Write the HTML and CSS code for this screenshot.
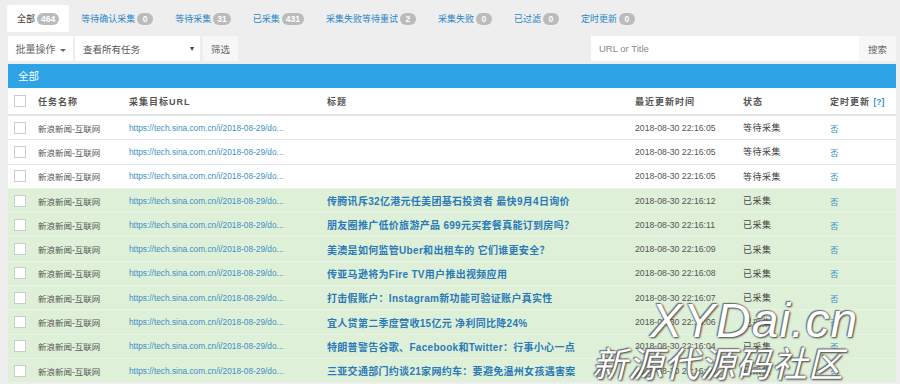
FILE: index.html
```html
<!DOCTYPE html>
<html lang="zh-CN">

<head>
    <meta charset="UTF-8">
    <title>采集任务</title>
    <link rel="stylesheet" href="styles.css">
</head>

<body>

    <!-- Status tabs -->
    <ul class="tabs">
        <li class="active">全部 <span class="badge">464</span></li>
        <li><a href="#">等待确认采集</a> <span class="badge">0</span></li>
        <li><a href="#">等待采集</a> <span class="badge">31</span></li>
        <li><a href="#">已采集</a> <span class="badge">431</span></li>
        <li><a href="#">采集失败等待重试</a> <span class="badge">2</span></li>
        <li><a href="#">采集失败</a> <span class="badge">0</span></li>
        <li><a href="#">已过滤</a> <span class="badge">0</span></li>
        <li><a href="#">定时更新</a> <span class="badge">0</span></li>
    </ul>

    <!-- Toolbar -->
    <div class="toolbar">
        <div class="actions">
            <button class="btn btn-batch">批量操作 <span class="caret"></span></button>
            <div class="select">查看所有任务 <span class="arrow">▾</span></div>
            <button class="btn btn-light">筛选</button>
        </div>
        <div class="search">
            <input type="text" placeholder="URL or Title">
            <button class="btn btn-light">搜索</button>
        </div>
    </div>

    <!-- Task table -->
    <div class="panel">
        <div class="panel-heading">全部</div>
        <table class="task-table">
            <thead>
                <tr>
                    <th class="col-check"><span class="check"></span></th>
                    <th class="col-name">任务名称</th>
                    <th class="col-url">采集目标URL</th>
                    <th class="col-title">标题</th>
                    <th class="col-time">最近更新时间</th>
                    <th class="col-status">状态</th>
                    <th class="col-cron">定时更新 <a href="#">[?]</a></th>
                </tr>
            </thead>
            <tbody id="task-tbody"></tbody>
        </table>
    </div>

    <div class="watermark">
        <div class="wm-big">XYDai.cn</div>
        <div class="wm-small">新源代源码社区</div>
    </div>

    <script>
        const tasks = [
            { title: "", time: "2018-08-30 22:16:05", status: "等待采集" },
            { title: "", time: "2018-08-30 22:16:05", status: "等待采集" },
            { title: "", time: "2018-08-30 22:16:05", status: "等待采集" },
            { title: "传腾讯斥32亿港元任美团基石投资者 最快9月4日询价", time: "2018-08-30 22:16:12", status: "已采集" },
            { title: "朋友圈推广低价旅游产品 699元买套餐真能订到房吗？", time: "2018-08-30 22:16:11", status: "已采集" },
            { title: "美澳是如何监管Uber和出租车的 它们谁更安全？", time: "2018-08-30 22:16:09", status: "已采集" },
            { title: "传亚马逊将为Fire TV用户推出视频应用", time: "2018-08-30 22:16:08", status: "已采集" },
            { title: "打击假账户：Instagram新功能可验证账户真实性", time: "2018-08-30 22:16:07", status: "已采集" },
            { title: "宜人贷第二季度营收15亿元 净利同比降24%", time: "2018-08-30 22:16:06", status: "已采集" },
            { title: "特朗普警告谷歌、Facebook和Twitter：行事小心一点", time: "2018-08-30 22:16:04", status: "已采集" },
            { title: "三亚交通部门约谈21家网约车：要避免温州女孩遇害案", time: "2018-08-30 22:16:00", status: "已采集" }
        ];

        const tbody = document.getElementById('task-tbody');
        tasks.forEach(task => {
            const done = task.status === '已采集';
            tbody.insertAdjacentHTML('beforeend', `
                <tr class="${done ? 'success' : ''}">
                    <td class="col-check"><span class="check"></span></td>
                    <td class="col-name">新浪新闻-互联网</td>
                    <td class="col-url"><a href="#">https://tech.sina.com.cn/i/2018-08-29/do...</a></td>
                    <td class="col-title"><a href="#">${task.title}</a></td>
                    <td class="col-time">${task.time}</td>
                    <td class="col-status">${task.status}</td>
                    <td class="col-cron"><a href="#">否</a></td>
                </tr>
            `);
        });
    </script>

</body>

</html>
```

FILE: styles.css
```css
body {
    margin: 0;
    padding: 5px 4px 0 7px;
    background-color: #eeeeee;
    font-family: "Liberation Sans", "Noto Sans CJK SC", sans-serif;
    font-size: 9px;
    color: #555;
    overflow: hidden;
}

a {
    color: #2a7ab8;
    text-decoration: none;
}

/* Tabs */
.tabs {
    list-style: none;
    margin: 0;
    padding: 0;
    display: flex;
    height: 27px;
}

.tabs li {
    display: flex;
    align-items: center;
    padding: 0 11px;
    font-size: 9px;
}

.tabs li a {
    color: #2a86c4;
}

.tabs li.active {
    background-color: #fff;
    color: #333;
    padding: 0 10px;
    border-radius: 3px 3px 0 0;
}

.tabs li:nth-child(2) {
    padding-left: 12px;
}

.badge {
    display: inline-block;
    margin-left: 2px;
    min-width: 8px;
    padding: 1px 4px;
    border-radius: 6px;
    background-color: #bbb;
    color: #fff;
    font-size: 8.5px;
    font-weight: bold;
    line-height: 10px;
    text-align: center;
}

/* Toolbar */
.toolbar {
    display: flex;
    justify-content: space-between;
    margin-top: 4px;
    height: 25px;
}

.actions,
.search {
    display: flex;
}

.btn {
    font-family: inherit;
    font-size: 9.5px;
    color: #666;
    background-color: #fff;
    border: none;
    padding: 0 8px;
    height: 25px;
    cursor: pointer;
}

.btn-light {
    background-color: #f7f7f7;
}

.btn-batch {
    width: 65px;
    padding: 0 0 0 1px;
    margin-left: 1px;
    font-size: 10px;
}

.caret {
    display: inline-block;
    width: 0;
    height: 0;
    margin-left: 2px;
    vertical-align: middle;
    border-top: 3px solid #666;
    border-left: 3px solid transparent;
    border-right: 3px solid transparent;
}

.select {
    display: flex;
    align-items: center;
    justify-content: space-between;
    width: 111px;
    margin: 0 3px 0 2px;
    padding: 0 6px 0 8px;
    background-color: #fff;
    color: #555;
    font-size: 9.5px;
}

.select .arrow {
    font-size: 8px;
    color: #444;
}

.search input {
    width: 268px;
    height: 25px;
    box-sizing: border-box;
    border: none;
    padding: 0 8px;
    font-family: inherit;
    font-size: 9.5px;
    background-color: #fff;
}

.search input::placeholder {
    color: #888;
}

.search .btn {
    width: 37px;
    padding: 0;
}

/* Panel */
.panel {
    margin-top: 3px;
    margin-left: 1px;
    background-color: #fff;
    width: 888px;
}

.panel-heading {
    background-color: #2ea3e6;
    color: #fff;
    font-size: 10.5px;
    height: 24px;
    line-height: 24px;
    padding-left: 10px;
}

.task-table {
    width: 100%;
    border-collapse: collapse;
    table-layout: fixed;
}

.task-table th,
.task-table td {
    text-align: left;
    padding: 0;
    white-space: nowrap;
    overflow: hidden;
}

.task-table th {
    height: 26px;
    font-size: 9px;
    font-weight: bold;
    color: #555;
    letter-spacing: 1px;
    border-bottom: 2px solid #e4e4e4;
}

.task-table td {
    height: 23.3px;
    border-top: 1px solid #e6e6e6;
    font-size: 8.5px;
}

.task-table tbody tr:first-child td {
    border-top: none;
}

.task-table tr.success td {
    background-color: #dff0d8;
    border-top-color: #e8f3e3;
}

.task-table .col-check { width: 24px; padding-left: 6px; }
.col-name { width: 91px; }
.col-url { width: 198px; }
.col-title { width: 308px; }
.col-time { width: 108px; }
.col-status { width: 87px; }

.col-url a {
    color: #3d8fc7;
    font-size: 8.3px;
}

.col-title a {
    font-weight: bold;
    font-size: 10px;
    letter-spacing: 0.3px;
    color: #2a7ab8;
}

td.col-time {
    color: #555;
    font-size: 8.7px;
}

td.col-status {
    color: #444;
    font-size: 9px;
    letter-spacing: 0.5px;
}

.col-cron a {
    color: #3d8fc7;
}

th.col-cron a {
    font-size: 8.5px;
    letter-spacing: 0;
}

.check {
    display: inline-block;
    width: 10px;
    height: 10px;
    border: 1px solid #ccc;
    background-color: #fff;
    vertical-align: middle;
}

/* Watermark overlay */
.watermark {
    position: absolute;
    left: 592px;
    top: 296px;
    color: #fff;
    text-shadow: 0 0 2px #555, 1px 1px 2px #444, -1px -1px 1px #777;
    pointer-events: none;
}

.wm-big {
    font-size: 48px;
    font-style: italic;
    line-height: 50px;
    padding-left: 58px;
    letter-spacing: 1px;
}

.wm-small {
    font-size: 35px;
    line-height: 38px;
    font-style: italic;
    letter-spacing: 1px;
}
```
